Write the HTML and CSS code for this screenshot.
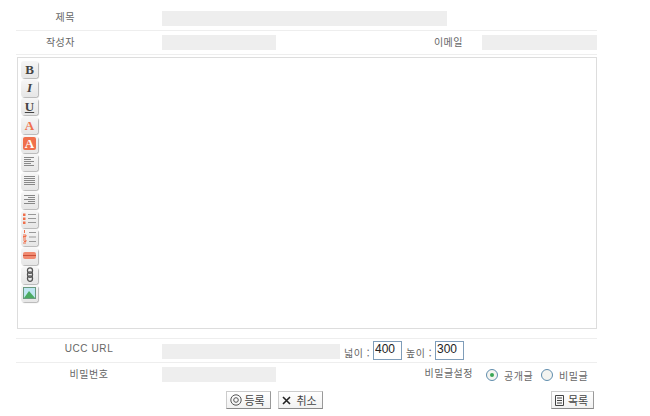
FILE: index.html
```html
<!DOCTYPE html>
<html lang="ko">
  <head>
    <meta charset="utf-8" />
    <title>글쓰기</title>
    <link rel="stylesheet" href="styles.css">
  </head>
  <body>
    <form class="write-form">
      <div class="row row-title">
        <label class="label">제목</label>
        <input class="field field-wide" type="text" />
      </div>
      <div class="row row-writer">
        <label class="label">작성자</label>
        <input class="field" type="text" />
        <label class="label-right">이메일</label>
        <input class="field field-email" type="text" />
      </div>

      <div class="editor">
        <div class="toolbar">
          <span class="tool"><b class="glyph">B</b></span>
          <span class="tool"><i class="glyph glyph-i">I</i></span>
          <span class="tool"><b class="glyph glyph-u">U</b></span>
          <span class="tool"><b class="glyph glyph-red">A</b></span>
          <span class="tool"><b class="glyph glyph-fill">A</b></span>
          <span class="tool">
            <svg width="11" height="10" viewBox="0 0 11 10"><path d="M0 .5h10M0 2.5h7M0 4.5h10M0 6.5h7M0 8.5h10" stroke="#888" /></svg>
          </span>
          <span class="tool">
            <svg width="11" height="10" viewBox="0 0 11 10"><path d="M0 .5h11M0 2.5h11M0 4.5h11M0 6.5h11M0 8.5h11" stroke="#888" /></svg>
          </span>
          <span class="tool">
            <svg width="11" height="10" viewBox="0 0 11 10"><path d="M0 .5h11M4 2.5h7M0 4.5h11M4 6.5h7M0 8.5h11" stroke="#888" /></svg>
          </span>
          <span class="tool">
            <svg width="13" height="13" viewBox="0 0 13 13"><path d="M5 2.500h8M5 6.500h8M5 10.500h8" stroke="#999" /><path d="M0 1.500h2.500v2.500H0zM0 5.500h2.500V8H0zM0 9.500h2.500V12H0z" fill="#f0704c" /></svg>
          </span>
          <span class="tool">
            <svg width="13" height="14" viewBox="0 0 13 14"><path d="M6 2.500h7M6 7h7M6 11.500h7" stroke="#999" /><path d="M1.500 0v3M0 5h3v1.500H0V8h3M0 10h3v1.500H1M0 13h3" stroke="#f0704c" fill="none" /></svg>
          </span>
          <span class="tool">
            <svg width="13" height="7" viewBox="0 0 13 7"><rect width="13" height="7" rx="2" fill="#f08a70" /><path d="M0 3.500h13" stroke="#c9503a" /></svg>
          </span>
          <span class="tool">
            <svg width="8" height="15" viewBox="0 0 8 15"><rect x="1.500" y=".8" width="5" height="5.500" rx="2.500" fill="none" stroke="#555" stroke-width="1.300" /><rect x="1.500" y="4.800" width="5" height="5.500" rx="2.500" fill="none" stroke="#555" stroke-width="1.300" /><rect x="1.500" y="8.800" width="5" height="5.500" rx="2.500" fill="none" stroke="#555" stroke-width="1.300" /></svg>
          </span>
          <span class="tool">
            <svg width="13" height="12" viewBox="0 0 13 12"><rect x=".5" y=".5" width="12" height="11" fill="#bfe6f2" stroke="#6a9a80" /><path d="M1 11 6 4l6 7z" fill="#4bab62" /></svg>
          </span>
        </div>
      </div>

      <div class="row row-ucc">
        <label class="label-center label-latin">UCC URL</label>
        <input class="field field-ucc" type="text" />
        <span class="size-label">넓이 :</span>
        <input class="size-input" type="text" value="400" />
        <span class="size-label size-label-next">높이 :</span>
        <input class="size-input" type="text" value="300" />
      </div>
      <div class="row row-pass">
        <label class="label-center">비밀번호</label>
        <input class="field" type="password" />
        <label class="label-secret">비밀글설정</label>
        <span class="radio radio-on"></span>
        <span class="radio-text">공개글</span>
        <span class="radio"></span>
        <span class="radio-text">비밀글</span>
      </div>

      <div class="actions">
        <button class="btn" type="button">
          <svg width="12" height="12" viewBox="0 0 12 12"><circle cx="6" cy="6" r="5.200" fill="none" stroke="#555" /><circle cx="6" cy="6" r="2.300" fill="none" stroke="#555" /></svg>등록
        </button>
        <button class="btn btn-cancel" type="button">
          <svg width="9" height="9" viewBox="0 0 9 9"><path d="m1 1 7 7M8 1 1 8" stroke="#222" stroke-width="1.600" /></svg>취소
        </button>
        <button class="btn btn-list" type="button">
          <svg width="9" height="11" viewBox="0 0 9 11"><path d="M.5.500h8v10h-8zM2 3h5M2 5.500h5M2 8h5" fill="none" stroke="#444" /></svg>목록
        </button>
      </div>
    </form>
  </body>
</html>
```

FILE: styles.css
```css
body {
  margin: 0;
  font-family: "Noto Sans CJK KR", "Liberation Sans", sans-serif;
  font-size: 10px;
  color: #666;
  background: #fff;
}

.write-form {
  width: 581px;
  margin-left: 16px;
  padding-top: 6px;
}

/* form rows */
.row {
  display: flex;
  align-items: center;
  height: 24px;
  border-bottom: 1px solid #eee;
}

.row-writer {
  height: 23px;
}

.row-ucc {
  height: 23px;
  border-top: 1px solid #eee;
  margin-top: 9px;
}

.row-pass {
  height: 24px;
  border-bottom: 0;
}

.label {
  width: 59px;
  margin-right: 87px;
  padding-bottom: 3px;
  text-align: right;
  letter-spacing: 0.5px;
}

.label-right {
  width: 187px;
  margin-right: 19px;
  padding-bottom: 3px;
  text-align: right;
  letter-spacing: 0.5px;
}

.label-center {
  width: 146px;
  padding-bottom: 4px;
  text-align: center;
  letter-spacing: 0.5px;
}

.label-latin {
  font-family: "Liberation Sans", sans-serif;
  letter-spacing: 0.6px;
}

.field {
  width: 114px;
  height: 15px;
  padding: 0;
  border: 0;
  background: #eee;
}

.field-wide {
  width: 285px;
}

.field-email {
  width: 115px;
}

.field-ucc {
  width: 178px;
  margin-top: 1px;
}

/* editor box */
.editor {
  box-sizing: border-box;
  width: 580px;
  height: 272px;
  margin: 2px 0 0 1px;
  padding: 3px 0 0 3px;
  border: 1px solid #ddd;
}

.toolbar {
  display: flex;
  flex-direction: column;
  gap: 1.7px;
  width: 17px;
}

.tool {
  display: flex;
  align-items: center;
  justify-content: center;
  box-sizing: border-box;
  width: 17px;
  height: 17px;
  padding-bottom: 1px;
  border-radius: 3px;
  background: linear-gradient(#f6f6f6, #e6e6e6);
  box-shadow: 1px 1px 1px #b5b5b5;
}

.glyph {
  font-family: "Liberation Serif", serif;
  font-size: 13px;
  line-height: 1;
  color: #444;
}

.glyph-i {
  font-weight: bold;
}

.glyph-u {
  text-decoration: underline;
}

.glyph-red {
  color: #f0704c;
}

.glyph-fill {
  width: 13px;
  border-radius: 2px;
  background: #f0704c;
  color: #fff;
  text-align: center;
}

/* size inputs */
.size-label {
  width: 26px;
  margin: 3px 3px 0 4px;
  letter-spacing: 0.5px;
  white-space: nowrap;
}

.size-input {
  box-sizing: border-box;
  width: 29px;
  height: 19px;
  padding: 0 1px 3px;
  border: 1px solid #7f9db9;
  font-family: "Liberation Sans", sans-serif;
  font-size: 12px;
  color: #222;
}

/* secret options */
.row-pass .field {
  margin-bottom: 2px;
}

.label-secret {
  width: 197px;
  margin: 0 13px 6px 0;
  text-align: right;
  letter-spacing: 0.5px;
}

.radio {
  position: relative;
  box-sizing: border-box;
  width: 12px;
  height: 12px;
  margin-right: 6px;
  border: 1px solid #5f8dad;
  border-radius: 50%;
  background: #f4f4f0;
}

.radio-on::after {
  content: "";
  position: absolute;
  top: 3px;
  left: 3px;
  width: 4px;
  height: 4px;
  border-radius: 50%;
  background: #3aa655;
}

.radio-text {
  margin-right: 8px;
  letter-spacing: 0.5px;
}

/* bottom buttons */
.actions {
  display: flex;
  gap: 7px;
  padding: 4px 3px 0 210px;
}

.btn {
  display: flex;
  align-items: center;
  justify-content: center;
  gap: 2px;
  box-sizing: border-box;
  width: 45px;
  height: 18px;
  padding: 0 2px 0 0;
  border: 1px solid #ccc;
  border-right-color: #999;
  border-bottom-color: #888;
  background: linear-gradient(#fff, #f1f1f1);
  font-family: "Noto Sans CJK KR", sans-serif;
  font-size: 11px;
  color: #444;
}

.btn-cancel {
  gap: 5px;
}

.btn-list {
  width: 43px;
  gap: 4px;
  margin-left: auto;
}
```
